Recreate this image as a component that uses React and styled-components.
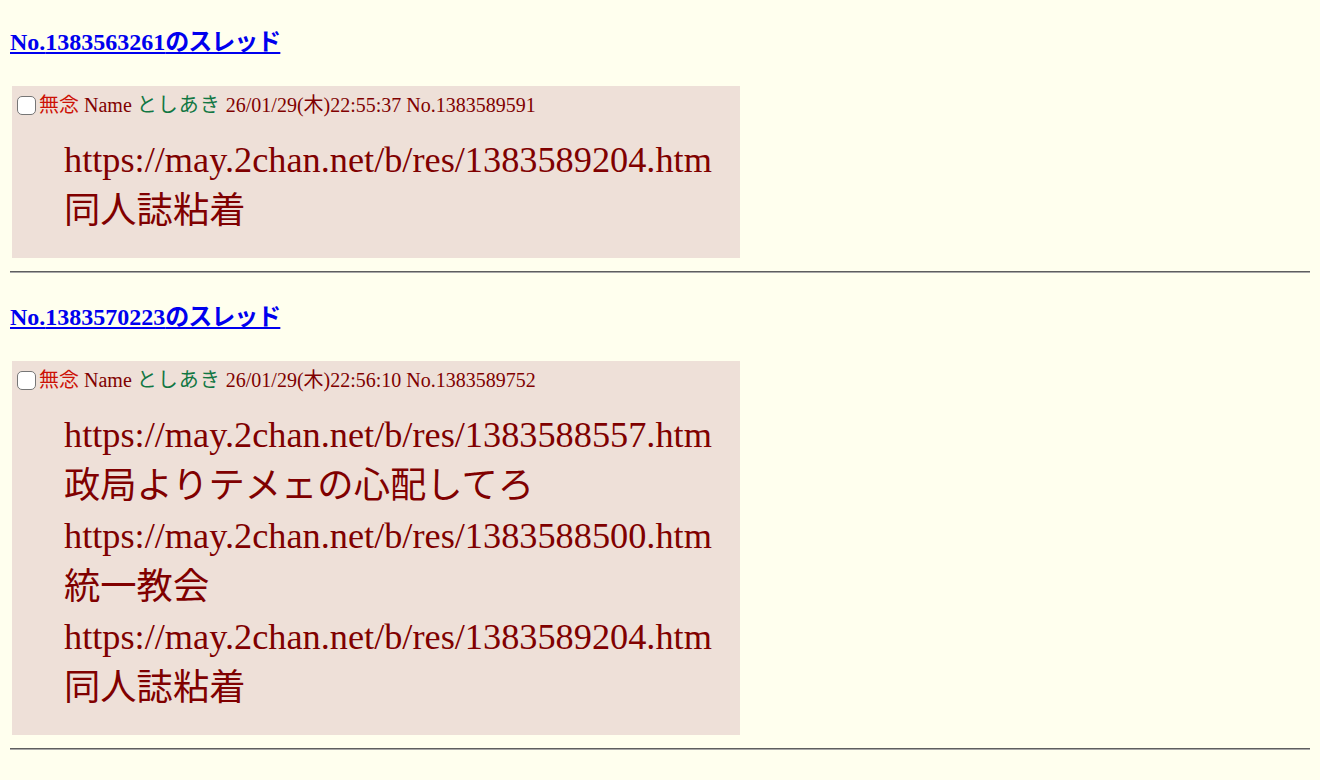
import React from 'react';
import styled, { createGlobalStyle } from 'styled-components';

const GlobalStyle = createGlobalStyle`
  html, body {
    margin: 0;
    padding: 0;
    background: #ffffee;
  }
  body {
    font-family: "Liberation Serif", "Noto Sans CJK JP", serif;
    color: #800000;
  }
`;

const Page = styled.div`
  padding: 28px 10px 20px 10px;
`;

const Thread = styled.section`
  display: flex;
  flex-direction: column;
  align-items: flex-start;
  margin-bottom: 30px;
`;

const ThreadLink = styled.a`
  font-size: 24px;
  font-weight: bold;
  line-height: 28px;
  color: #0000ee;
  text-decoration: underline;
  margin-bottom: 30px;

  span {
    letter-spacing: -1px;
  }
`;

const Reply = styled.div`
  margin-left: 2px;
  background: #eee0d8;
  padding: 7px 29px 22px 5px;
  width: 694px;
`;

const PostHeader = styled.div`
  display: flex;
  align-items: center;
  gap: 5px;
  font-size: 20px;
  line-height: 24px;
  white-space: nowrap;
`;

const Check = styled.input.attrs({ type: 'checkbox' })`
  appearance: none;
  box-sizing: border-box;
  flex: none;
  margin: 0 -2px 0 0;
  width: 19px;
  height: 19px;
  border: 1.5px solid #767676;
  border-radius: 5px;
  background: #fff;
`;

const Subject = styled.span`
  color: #cc1105;
`;

const Name = styled.span`
  color: #117743;
  letter-spacing: 1px;
`;

const Body = styled.blockquote`
  margin: 18px 0 0 47px;
  font-size: 36.3px;
  line-height: 50.5px;
`;

const Rule = styled.hr`
  align-self: stretch;
  margin: 13px 0 0 0;
  height: 0;
  border: none;
  border-top: 1px solid #5e5e5e;
  border-bottom: 1px solid #a8a8a8;
`;

const threads = [
  {
    id: '1383563261',
    time: '26/01/29(木)22:55:37',
    no: '1383589591',
    lines: ['https://may.2chan.net/b/res/1383589204.htm', '同人誌粘着'],
  },
  {
    id: '1383570223',
    time: '26/01/29(木)22:56:10',
    no: '1383589752',
    lines: [
      'https://may.2chan.net/b/res/1383588557.htm',
      '政局よりテメェの心配してろ',
      'https://may.2chan.net/b/res/1383588500.htm',
      '統一教会',
      'https://may.2chan.net/b/res/1383589204.htm',
      '同人誌粘着',
    ],
  },
];

const App = () => (
  <>
    <GlobalStyle />
    <Page>
      {threads.map((t) => (
        <Thread key={t.id}>
          <ThreadLink href="#">
            No.{t.id}<span>のスレッド</span>
          </ThreadLink>
          <Reply>
            <PostHeader>
              <Check />
              <Subject>無念</Subject>
              <span>Name</span>
              <Name>としあき</Name>
              <span>{t.time} No.{t.no}</span>
            </PostHeader>
            <Body>
              {t.lines.map((line, i) => (
                <div key={i}>{line}</div>
              ))}
            </Body>
          </Reply>
          <Rule />
        </Thread>
      ))}
    </Page>
  </>
);

export default App;
